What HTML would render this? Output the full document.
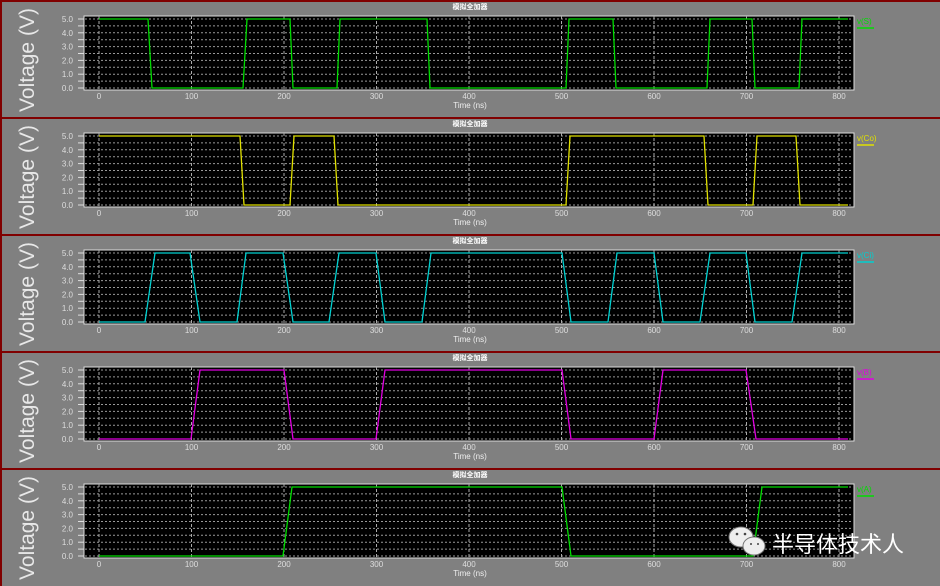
<!DOCTYPE html>
<html><head><meta charset="utf-8"><style>
html,body{margin:0;padding:0;background:#808080;width:940px;height:586px;overflow:hidden}
svg{display:block}
text{font-family:"Liberation Sans","Noto Sans CJK SC",sans-serif}
</style></head><body>
<svg id="s" width="940" height="586" xmlns="http://www.w3.org/2000/svg"></svg>
<script>
const s=document.getElementById('s');let h='';
const X=t=>99+0.925*t;
const panels=[
 {c:'#00dd00',l:'v(S)',pts:[[99,1],[148,1],[152,0],[243,0],[247,1],[290,1],[293,0],[337,0],[340,1],[427,1],[430,0],[566,0],[569,1],[613,1],[616,0],[707,0],[710,1],[752,1],[755,0],[799,0],[802,1],[848,1]]},
 {c:'#e0e000',l:'v(Co)',pts:[[99,1],[240,1],[244,0],[290,0],[294,1],[334,1],[338,0],[566,0],[570,1],[704,1],[708,0],[753,0],[757,1],[796,1],[800,0],[848,0]]},
 {c:'#00d0d0',l:'v(Ci)',pts:[[99,0],[145,0],[155,1],[190,1],[200,0],[237,0],[246,1],[283,1],[293,0],[329,0],[339,1],[376,1],[385,0],[422,0],[431,1],[562,1],[571,0],[608,0],[617,1],[654,1],[663,0],[700,0],[710,1],[746,1],[755,0],[792,0],[802,1],[848,1]]},
 {c:'#e000e0',l:'v(B)',pts:[[99,0],[191,0],[200,1],[284,1],[293,0],[376,0],[385,1],[562,1],[571,0],[654,0],[663,1],[746,1],[756,0],[848,0]]},
 {c:'#00dd00',l:'v(A)',pts:[[99,0],[283,0],[292,1],[562,1],[571,0],[753,0],[762,1],[848,1]]}
];
panels.forEach((p,i)=>{
 const o=i*117;const top=o+16,bot=o+90;const y5=o+19,y0=o+88;
 h+=`<rect x="0" y="${o}" width="940" height="2" fill="#800000"/>`;
 h+=`<text x="470" y="${o+9}" font-size="7" fill="#fff" text-anchor="middle" font-weight="bold">模拟全加器</text>`;
 h+=`<text transform="translate(34 ${o+60}) rotate(-90)" font-size="21" fill="#e8e8e8" text-anchor="middle">Voltage (V)</text>`;
 h+=`<rect x="84" y="${top}" width="770" height="${bot-top}" fill="#000" stroke="#ddd" stroke-width="1"/>`;
 for(let k=0;k<=10;k++){const y=y0-(y0-y5)*k/10;
  h+=`<line x1="85" x2="853" y1="${y}" y2="${y}" stroke="#999" stroke-width="1" stroke-dasharray="2,2"/>`;
  if(k%2==0)h+=`<text x="73" y="${y+3}" font-size="8" fill="#ddd" text-anchor="end">${(k/2).toFixed(1)}</text>`;
  h+=`<line x1="78" x2="84" y1="${y}" y2="${y}" stroke="#ddd"/>`;}
 for(let t=0;t<=800;t+=100){const x=X(t);
  h+=`<line x1="${x}" x2="${x}" y1="${top}" y2="${bot}" stroke="#aaa" stroke-dasharray="3,2"/>`;
  h+=`<text x="${x}" y="${o+99}" font-size="8" fill="#ddd" text-anchor="middle">${t}</text>`;}
 h+=`<text x="470" y="${o+108}" font-size="8" fill="#eee" text-anchor="middle">Time (ns)</text>`;
 const d=p.pts.map((q,j)=>(j?'L':'M')+q[0]+' '+(q[1]?y5:y0)).join(' ');
 h+=`<path d="${d}" fill="none" stroke="${p.c}" stroke-width="1.3"/>`;
 h+=`<text x="857" y="${o+24}" font-size="8" fill="${p.c}">${p.l}</text>`;
 h+=`<line x1="857" x2="874" y1="${o+28}" y2="${o+28}" stroke="${p.c}" stroke-width="1.5"/>`;
});
h+=`<rect x="0" y="0" width="2" height="586" fill="#800000"/>`;
h+=`<g fill="#eee" stroke="#777" stroke-width="1"><ellipse cx="741" cy="537" rx="12" ry="10"/><ellipse cx="754" cy="546" rx="11" ry="9"/></g>`;
h+=`<g fill="#444"><circle cx="737" cy="534" r="1.3"/><circle cx="745" cy="534" r="1.3"/><circle cx="751" cy="544" r="1"/><circle cx="758" cy="544" r="1"/></g>`;
h+=`<text x="772" y="552" font-size="22" fill="#fff" style="font-family:'Noto Sans CJK SC',sans-serif">半导体技术人</text>`;
s.innerHTML=h;
</script>
</body></html>
